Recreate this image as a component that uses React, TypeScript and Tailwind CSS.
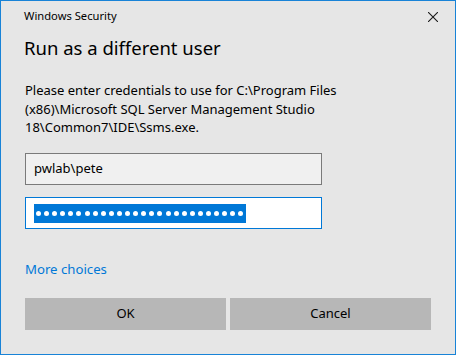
import React from 'react';

function CloseIcon() {
    return (
        <svg width="10" height="10" viewBox="0 0 10 10" className="block">
            <path d="M0 0 L10 10 M10 0 L0 10" stroke="#1a1a1a" strokeWidth="1.1" fill="none" />
        </svg>
    );
}

export default function App() {
    const dots = Array.from({ length: 26 });

    return (
        <div className="w-[456px] h-[355px] bg-[#e6e6e6] border border-[#1883d7] flex flex-col text-black font-['Noto_Sans',sans-serif]">
            {/* title bar */}
            <div className="flex items-start justify-between pl-[23px] pr-[17px] pt-[7px]">
                <span className="text-[11.2px] leading-[16px]">Windows Security</span>
                <div className="mt-[4px]">
                    <CloseIcon />
                </div>
            </div>

            <div className="pl-[24px] flex flex-col items-start">
                <h1 className="-ml-[1px] mt-[11px] text-[18.5px] leading-[26px]">Run as a different user</h1>

                <p className="mt-[20px] w-[325px] text-[13px] leading-[18.5px]">
                    Please enter credentials to use for C:\Program Files (x86)\Microsoft SQL Server Management Studio 18\Common7\IDE\Ssms.exe.
                </p>

                <div className="mt-[16.5px] w-[297px] h-[32px] bg-[#f0f0f0] border border-[#7a7a7a] flex items-center px-[8px] text-[13px]">
                    pwlab\pete
                </div>

                <div className="mt-[12px] w-[297px] h-[32px] bg-white border border-[#0078d7] flex items-center px-[8px]">
                    <div className="w-[212px] h-[19px] bg-[#0078d7] flex items-center gap-[3.1px] pl-[2px]">
                        {dots.map((_, i) => (
                            <div key={i} className="w-[5px] h-[5px] shrink-0 rounded-full bg-white"></div>
                        ))}
                    </div>
                </div>

                <a className="mt-[31px] text-[13.2px] leading-[19px] text-[#0078d7] cursor-pointer">More choices</a>

                <div className="mt-[19px] flex gap-[4px]">
                    <button className="w-[201px] h-[32px] bg-[#b7b7b7] text-[13px]">OK</button>
                    <button className="w-[201px] h-[32px] bg-[#b7b7b7] text-[13px]">Cancel</button>
                </div>
            </div>
        </div>
    );
}
